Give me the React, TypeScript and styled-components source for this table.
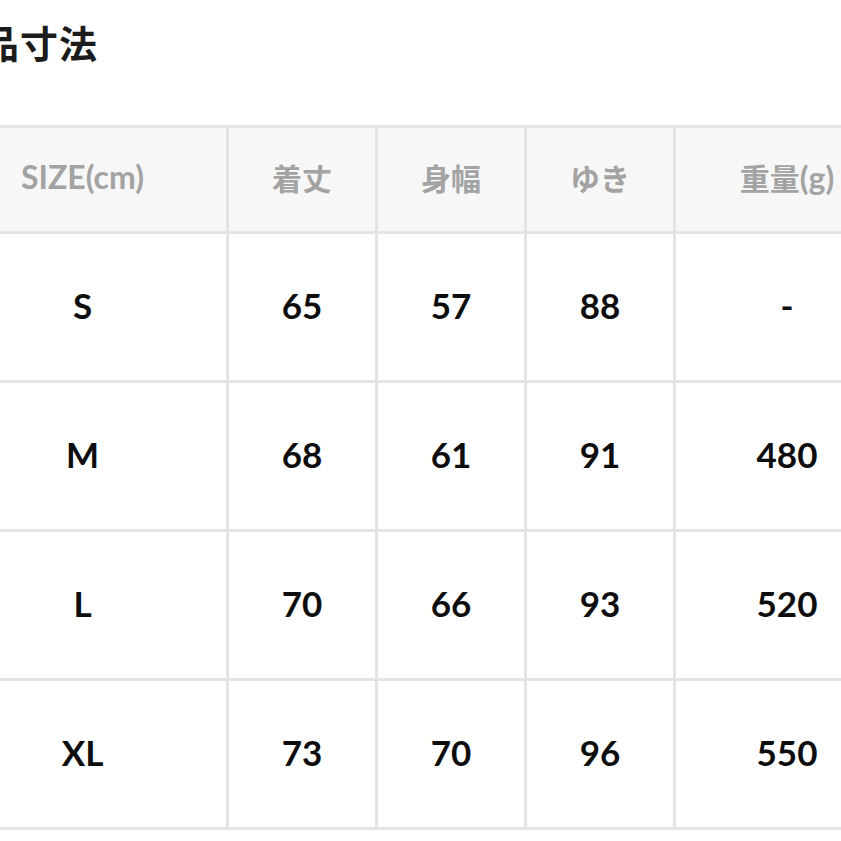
import styled, { createGlobalStyle } from "styled-components";

const GlobalStyle = createGlobalStyle`
  html, body {
    margin: 0;
    padding: 0;
    background: #ffffff;
    overflow: hidden;
  }
  body {
    font-family: Lato, "Noto Sans CJK JP", sans-serif;
  }
`;

interface ISizeRow {
  size: string;
  length: string;
  width: string;
  sleeve: string;
  weight: string;
}

const rows: ISizeRow[] = [
  { size: "S", length: "65", width: "57", sleeve: "88", weight: "-" },
  { size: "M", length: "68", width: "61", sleeve: "91", weight: "480" },
  { size: "L", length: "70", width: "66", sleeve: "93", weight: "520" },
  { size: "XL", length: "73", width: "70", sleeve: "96", weight: "550" },
];

const Page = styled.div`
  width: 841px;
  height: 841px;
  overflow: hidden;
`;
const Section = styled.section`
  margin-left: -64px;
  width: 962px;
  padding-top: 19px;
`;
const Title = styled.h2`
  margin: 0 0 0 6px;
  font-family: "Noto Sans CJK JP", sans-serif;
  font-weight: 700;
  font-size: 38px;
  line-height: 46px;
  letter-spacing: 1px;
  color: #1c1c1c;
`;
const Table = styled.table`
  margin-top: 60px;
  width: 100%;
  border-collapse: collapse;
  table-layout: fixed;
`;
const Col = styled.col<{ $w: number }>`
  width: ${(p) => p.$w}px;
`;
const HeadCell = styled.th`
  height: 98px;
  padding: 0 0 5px;
  background: #f7f7f7;
  border: 3px solid #e4e4e4;
  font-family: Lato, "Noto Sans CJK JP", sans-serif;
  font-weight: 700;
  font-size: 32px;
  line-height: 40px;
  color: #a3a3a3;
  text-align: center;
  vertical-align: middle;
`;
const Jp = styled.span`
  font-family: "Noto Sans CJK JP", sans-serif;
  font-size: 30px;
`;
const Cell = styled.td`
  height: 141px;
  padding: 0 0 5px;
  border: 3px solid #e4e4e4;
  font-family: Lato, sans-serif;
  font-weight: 700;
  font-size: 35px;
  line-height: 42px;
  color: #0d0d0d;
  text-align: center;
  vertical-align: middle;
`;

function App() {
  return (
    <Page>
      <GlobalStyle />
      <Section>
        <Title>商品寸法</Title>
        <Table>
          <colgroup>
            <Col $w={290} />
            <Col $w={149} />
            <Col $w={149} />
            <Col $w={149} />
            <Col $w={225} />
          </colgroup>
          <thead>
            <tr>
              <HeadCell>SIZE(cm)</HeadCell>
              <HeadCell>
                <Jp>着丈</Jp>
              </HeadCell>
              <HeadCell>
                <Jp>身幅</Jp>
              </HeadCell>
              <HeadCell>
                <Jp>ゆき</Jp>
              </HeadCell>
              <HeadCell>
                <Jp>重量</Jp>(g)
              </HeadCell>
            </tr>
          </thead>
          <tbody>
            {rows.map((r) => (
              <tr key={r.size}>
                <Cell>{r.size}</Cell>
                <Cell>{r.length}</Cell>
                <Cell>{r.width}</Cell>
                <Cell>{r.sleeve}</Cell>
                <Cell>{r.weight}</Cell>
              </tr>
            ))}
          </tbody>
        </Table>
      </Section>
    </Page>
  );
}
export default App;
